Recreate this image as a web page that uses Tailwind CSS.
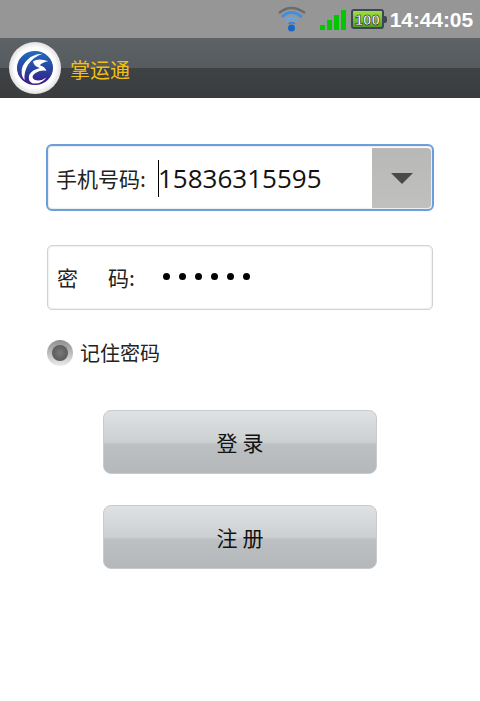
<!DOCTYPE html>
<html lang="zh">
<head>
    <meta charset="UTF-8">
    <title>掌运通</title>
    <script src="https://cdn.jsdelivr.net/npm/@tailwindcss/browser@4"></script>
</head>
<body class="w-[480px] h-[701px] overflow-hidden bg-white font-['Noto_Sans_CJK_SC','Noto_Sans',sans-serif]">

    <!-- Status bar -->
    <div class="h-[38px] bg-[#969696] flex items-center justify-end pr-[7px]">
        <svg width="30" height="27" viewBox="0 0 30 27" class="mr-[13px] mt-[-1px]">
            <path d="M2 8 Q14 -2 28 8" fill="none" stroke="#6c6c6c" stroke-width="2.5"/>
            <path d="M5 12 Q14 3 25 12" fill="none" stroke="#3f8fe0" stroke-width="3"/>
            <path d="M9 16 Q14.500 10 20.500 16" fill="none" stroke="#55aaf0" stroke-width="2.500"/>
            <path d="M11.500 19 Q14.500 16.500 18 19" fill="none" stroke="#2f7fd8" stroke-width="1.500"/>
            <circle cx="14.500" cy="23" r="3.500" fill="#1a66c8"/>
        </svg>
        <div class="flex items-end gap-[2px] h-[22px] mr-[5px] mt-[-1px]">
            <div class="w-[5px] h-[5px] bg-[#00c800]"></div>
            <div class="w-[5px] h-[10px] bg-[#00c800]"></div>
            <div class="w-[5px] h-[15px] bg-[#00c800]"></div>
            <div class="w-[5px] h-[20px] bg-[#00c800]"></div>
        </div>
        <div class="flex items-center mr-[3px]">
            <div class="w-[33px] h-[20px] rounded-[3px] border-2 border-[#3c4654] bg-gradient-to-b from-[#a0e040] to-[#55a020] flex items-center justify-center font-['Liberation_Sans',sans-serif] font-bold text-[15px] leading-none text-white [-webkit-text-stroke:0.5px_#000]">100</div>
            <div class="w-[3px] h-[7px] bg-[#3c4654] rounded-r-[2px]"></div>
        </div>
        <span class="font-['Liberation_Sans',sans-serif] font-bold text-[21px] leading-none text-white tracking-[-0.1px]">14:44:05</span>
    </div>

    <!-- Title bar -->
    <div class="h-[60px] bg-[linear-gradient(#5c6266_0,#565b5f_50%,#3f4244_50%,#3a3c3e_100%)] flex items-center pl-[9px]">
        <div class="w-[52px] h-[52px] rounded-full bg-[radial-gradient(circle,#ffffff_55%,#d8d8d8_75%,transparent_100%)] flex items-center justify-center">
            <svg width="38" height="38" viewBox="0 0 40 40" class="blur-[0.4px]">
                <defs>
                    <linearGradient id="logo" x1="0" y1="0" x2="0" y2="1">
                        <stop offset="0" stop-color="#1f6cc0"/>
                        <stop offset="0.6" stop-color="#2a3f9c"/>
                        <stop offset="1" stop-color="#3d1688"/>
                    </linearGradient>
                </defs>
                <ellipse cx="20" cy="20" rx="19" ry="18" fill="url(#logo)"/>
                <path d="M28 5 Q14 5 7 18 Q4 27 9 33 Q8 24 13 16 Q19 8 28 5Z" fill="#ffffff"/>
                <path d="M18 13 Q24 9 34 13 Q28 14 25 17 Q31 19 32 23 Q26 22 21 25 Q15 29 19 32 Q25 35 32 30 Q26 38 17 36 Q12 33 14 27 Q17 22 25 20 Q18 18 18 13Z" fill="#ffffff"/>
            </svg>
        </div>
        <span class="ml-[9px] text-[20px] leading-none text-[#f2c010] mt-[3px]">掌运通</span>
    </div>

    <!-- Form -->
    <div class="flex flex-col px-[46px]">
        <div class="mt-[46px] h-[67px] w-[388px] rounded-[6px] border-2 border-[#6a9fdc] bg-white pt-[2px] pb-[1px] pl-[2px] pr-[1px] flex items-stretch shadow-[inset_0_0_2px_#bbb]">
            <div class="flex-1 flex items-center pl-[6px]">
                <span class="text-[21px] leading-none text-[#222] w-[102px]">手机号码:</span>
                <div class="w-px h-[37px] bg-black"></div>
                <span class="font-['Open_Sans',sans-serif] text-[26px] leading-none text-[#111] ml-[-1px] mt-[-1px]">15836315595</span>
            </div>
            <div class="w-[59px] rounded-r-[4px] bg-[linear-gradient(#b8b9b6,#c0c1be)] flex items-center justify-center">
                <div class="w-0 h-0 border-x-[11px] border-x-transparent border-t-[11px] border-t-[#4a4a4a]"></div>
            </div>
        </div>

        <div class="mt-[34px] h-[65px] w-[386px] ml-px rounded-[5px] border border-[#d2d2d2] bg-white flex items-center pl-[9px] shadow-[inset_0_0_2px_#ccc]">
            <span class="text-[21px] leading-none text-[#222] w-[51px]">密</span>
            <span class="text-[21px] leading-none text-[#222] w-[55px]">码:</span>
            <div class="flex gap-[9px] mt-[-2px]">
                <div class="w-[7px] h-[7px] rounded-full bg-black"></div>
                <div class="w-[7px] h-[7px] rounded-full bg-black"></div>
                <div class="w-[7px] h-[7px] rounded-full bg-black"></div>
                <div class="w-[7px] h-[7px] rounded-full bg-black"></div>
                <div class="w-[7px] h-[7px] rounded-full bg-black"></div>
                <div class="w-[7px] h-[7px] rounded-full bg-black"></div>
            </div>
        </div>

        <div class="mt-[30px] flex items-center ml-px">
            <div class="w-[26px] h-[26px] rounded-full bg-gradient-to-b from-[#8e8e8e] to-[#ececec] flex items-center justify-center">
                <div class="w-[16px] h-[16px] rounded-full bg-[radial-gradient(circle,#7a7a7a,#4e4e4e)]"></div>
            </div>
            <span class="ml-[7px] text-[20px] leading-none text-[#222]">记住密码</span>
        </div>

        <div class="mt-[44px] ml-[57px] w-[274px] h-[64px] rounded-[8px] border border-[#c8cacc] bg-[linear-gradient(#dfe2e4_0,#cdd0d1_50%,#bdc0c2_54%,#b5b8ba_100%)] flex items-center justify-center text-[21px] leading-none tracking-[5px] text-[#111] pl-[5px]">登录</div>
        <div class="mt-[31px] ml-[57px] w-[274px] h-[64px] rounded-[8px] border border-[#c8cacc] bg-[linear-gradient(#dfe2e4_0,#cdd0d1_50%,#bdc0c2_54%,#b5b8ba_100%)] flex items-center justify-center text-[21px] leading-none tracking-[5px] text-[#111] pl-[5px]">注册</div>
    </div>
</body>
</html>
